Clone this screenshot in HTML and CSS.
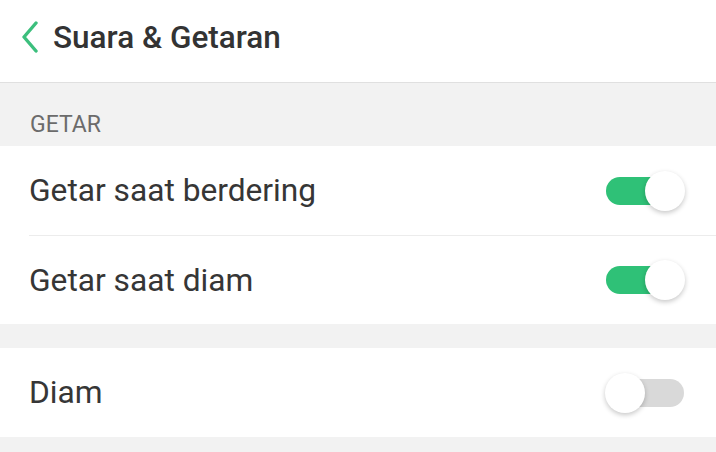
FILE: index.html
```html
<!DOCTYPE html>
<html lang="id">
  <head>
    <meta charset="UTF-8" />
    <meta name="viewport" content="width=device-width, initial-scale=1.0" />
    <title>Suara &amp; Getaran</title>
    <link rel="stylesheet" href="styles.css">
  </head>

  <body>
    <header class="topbar">
      <svg class="back" width="18" height="32" viewBox="0 0 18 32">
        <path d="M15 2 L3 16 L15 30" fill="none" stroke="#3cbf7d" stroke-width="3.4" stroke-linecap="round" stroke-linejoin="round" />
      </svg>
      <h1>Suara &amp; Getaran</h1>
    </header>

    <div class="section-title">GETAR</div>
    <ul class="group">
      <li class="row">
        <span>Getar saat berdering</span>
        <span class="switch on"><span class="knob"></span></span>
      </li>
      <li class="row">
        <span>Getar saat diam</span>
        <span class="switch on"><span class="knob"></span></span>
      </li>
    </ul>

    <div class="spacer"></div>
    <ul class="group">
      <li class="row">
        <span>Diam</span>
        <span class="switch"><span class="knob"></span></span>
      </li>
    </ul>
    <div class="spacer"></div>
  </body>
</html>
```

FILE: styles.css
```css
body {
  margin: 0;
  font-family: Roboto, "Noto Sans", sans-serif;
  background-color: #f2f2f2;
  color: #333;
  overflow: hidden;
}

.topbar {
  display: flex;
  align-items: center;
  height: 82px;
  background-color: #fff;
  border-bottom: 1px solid #e0e0e0;
  padding-left: 21px;
}

.back {
  margin-right: 14px;
  margin-top: -8px;
}

.topbar h1 {
  margin: 0;
  margin-top: -8px;
  font-size: 31.5px;
  font-weight: 500;
  color: #333;
}

.section-title {
  height: 63px;
  padding-left: 30px;
  padding-top: 20px;
  box-sizing: border-box;
  display: flex;
  align-items: center;
  font-size: 23px;
  color: #6b6b6b;
}

.group {
  list-style: none;
  margin: 0;
  padding: 0;
  background-color: #fff;
}

.row {
  display: flex;
  align-items: center;
  justify-content: space-between;
  height: 89px;
  margin-left: 29px;
  padding-right: 32px;
  font-size: 31.7px;
  color: #363636;
}

.row + .row {
  border-top: 1px solid #ececec;
  height: 88px;
}

.spacer {
  height: 24px;
}

.switch {
  position: relative;
  width: 78px;
  height: 28px;
  border-radius: 14px;
  background-color: #d9d9d9;
}

.switch.on {
  background-color: #2fc177;
}

.knob {
  position: absolute;
  top: -6px;
  left: -1px;
  width: 40px;
  height: 40px;
  border-radius: 50%;
  background-color: #fff;
  box-shadow: 0 2px 5px rgba(0, 0, 0, 0.22);
}

.switch.on .knob {
  left: auto;
  right: -1px;
}
```
